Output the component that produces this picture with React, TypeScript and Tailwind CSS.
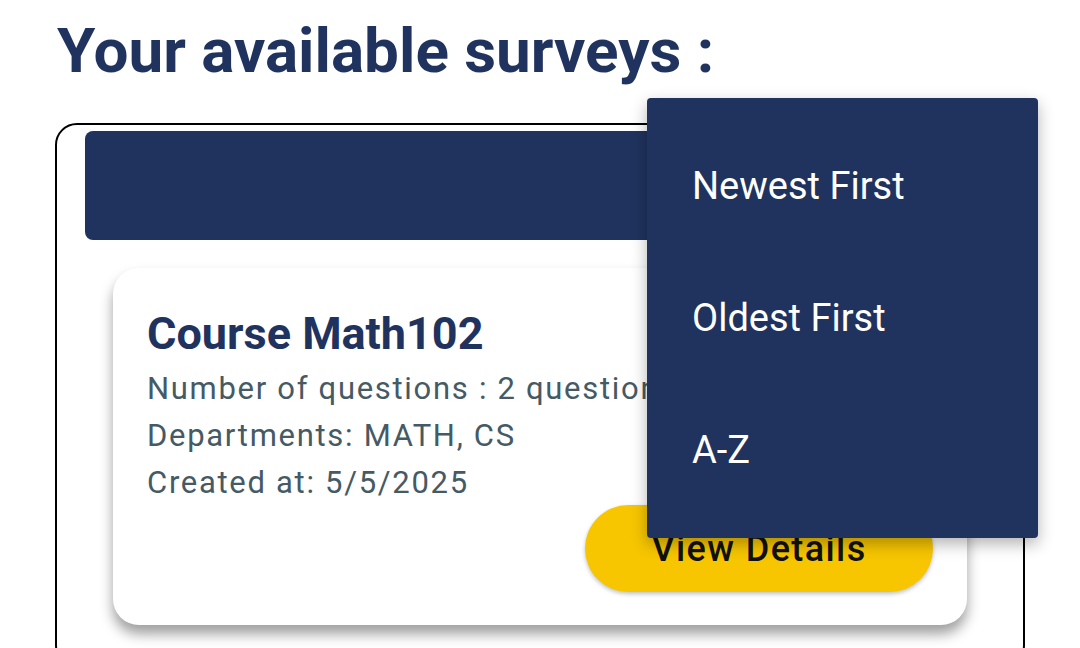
import React from "react";

export default function App() {
  const navy = "bg-[#1f335e]";
  return (
    <div className="relative w-[1080px] h-[648px] overflow-hidden bg-white font-['Roboto',sans-serif]">
      <div className="pl-[55px] pr-[55px]">
        <h1 className="pt-[20px] pl-[2px] text-[62px] leading-none font-bold text-[#1f335e] tracking-[0px]">
          Your available surveys :
        </h1>
        <div className="mt-[41px] border-[2.5px] border-black rounded-[22px] px-[28px] pt-[6px] pb-[40px]">
          <div className={`h-[109px] rounded-[8px] ${navy}`} />
          <div className="mt-[28px] mx-[28px] bg-white rounded-[26px] shadow-[0_9px_13px_rgba(0,0,0,0.38)] px-[34px] pt-[43px] pb-[33px] flex flex-col">
            <div className="text-[45px] leading-none font-bold text-[#1f335e]">Course Math102</div>
            <div className="mt-[9px] text-[31px] leading-[47px] tracking-[1.7px] text-[#455a64] whitespace-nowrap">
              <div>Number of questions : 2 questions</div>
              <div>Departments: MATH, CS</div>
              <div>Created at: 5/5/2025</div>
            </div>
            <button className="self-end mt-[-1px] w-[348px] h-[87px] rounded-full bg-[#f7c600] shadow-[0_2px_4px_rgba(0,0,0,0.25)] text-[36px] tracking-[1.4px] font-medium text-[#111111]">
              View Details
            </button>
          </div>
        </div>
      </div>

      <div className={`absolute left-[647px] top-[98px] w-[391px] rounded-[4px] ${navy} py-[22px] shadow-[0_6px_16px_rgba(0,0,0,0.3)]`}>
        {["Newest First", "Oldest First", "A-Z"].map((t) => (
          <div key={t} className="h-[132px] flex items-center pl-[45px] text-[38px] text-white">
            {t}
          </div>
        ))}
      </div>
    </div>
  );
}
